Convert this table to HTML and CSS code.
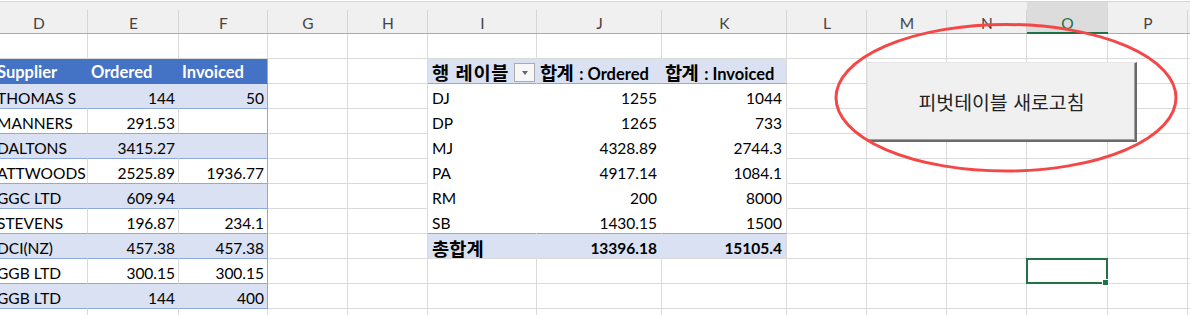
FILE: index.html
```html
<!DOCTYPE html>
<html lang="ko">
<head>
<meta charset="utf-8">
<title>Pivot refresh</title>
<link rel="stylesheet" href="styles.css">
</head>
<body>
<div class="page">
  <div class="sheet">
    <div class="cols">
      <div class="ch">D</div><div class="ch">E</div><div class="ch">F</div><div class="ch">G</div><div class="ch">H</div><div class="ch">I</div><div class="ch">J</div><div class="ch">K</div><div class="ch">L</div><div class="ch">M</div><div class="ch">N</div><div class="ch on">O</div><div class="ch">P</div><div class="ch">Q</div>
    </div>

    <!-- row 1 -->
    <div class="row">
      <div class="c"></div><div class="c"></div><div class="c"></div><div class="c"></div><div class="c"></div><div class="c"></div><div class="c"></div><div class="c"></div><div class="c"></div><div class="c"></div><div class="c"></div><div class="c"></div><div class="c"></div><div class="c"></div>
    </div>
    <!-- row 2 -->
    <div class="row">
      <div class="c d th">Supplier</div><div class="c th">Ordered</div><div class="c th edge">Invoiced</div>
      <div class="c"></div><div class="c"></div>
      <div class="c ph pi"><span class="ko kh">행 레이블</span><span class="dd"><i class="tri"></i></span></div>
      <div class="c ph"><span class="ko ko2">합계</span> : Ordered</div>
      <div class="c ph last"><span class="ko ko2">합계</span> : Invoiced</div>
      <div class="c"></div><div class="c"></div><div class="c"></div><div class="c"></div><div class="c"></div><div class="c"></div>
    </div>
    <!-- row 3 -->
    <div class="row">
      <div class="c d band">THOMAS S</div><div class="c r band">144</div><div class="c r band edge">50</div>
      <div class="c"></div><div class="c"></div>
      <div class="c pd">DJ</div><div class="c r pd">1255</div><div class="c r pd last">1044</div>
      <div class="c"></div><div class="c"></div><div class="c"></div><div class="c"></div><div class="c"></div><div class="c"></div>
    </div>
    <!-- row 4 -->
    <div class="row">
      <div class="c d wt">MANNERS</div><div class="c r wt">291.53</div><div class="c r wt edge"></div>
      <div class="c"></div><div class="c"></div>
      <div class="c pd">DP</div><div class="c r pd">1265</div><div class="c r pd last">733</div>
      <div class="c"></div><div class="c"></div><div class="c"></div><div class="c"></div><div class="c"></div><div class="c"></div>
    </div>
    <!-- row 5 -->
    <div class="row">
      <div class="c d band">DALTONS</div><div class="c r band">3415.27</div><div class="c r band edge"></div>
      <div class="c"></div><div class="c"></div>
      <div class="c pd">MJ</div><div class="c r pd">4328.89</div><div class="c r pd last">2744.3</div>
      <div class="c"></div><div class="c"></div><div class="c"></div><div class="c"></div><div class="c"></div><div class="c"></div>
    </div>
    <!-- row 6 -->
    <div class="row">
      <div class="c d wt">ATTWOODS</div><div class="c r wt">2525.89</div><div class="c r wt edge">1936.77</div>
      <div class="c"></div><div class="c"></div>
      <div class="c pd">PA</div><div class="c r pd">4917.14</div><div class="c r pd last">1084.1</div>
      <div class="c"></div><div class="c"></div><div class="c"></div><div class="c"></div><div class="c"></div><div class="c"></div>
    </div>
    <!-- row 7 -->
    <div class="row">
      <div class="c d band">GGC LTD</div><div class="c r band">609.94</div><div class="c r band edge"></div>
      <div class="c"></div><div class="c"></div>
      <div class="c pd">RM</div><div class="c r pd">200</div><div class="c r pd last">8000</div>
      <div class="c"></div><div class="c"></div><div class="c"></div><div class="c"></div><div class="c"></div><div class="c"></div>
    </div>
    <!-- row 8 -->
    <div class="row">
      <div class="c d wt">STEVENS</div><div class="c r wt">196.87</div><div class="c r wt edge">234.1</div>
      <div class="c"></div><div class="c"></div>
      <div class="c pd pend">SB</div><div class="c r pd pend">1430.15</div><div class="c r pd pend last">1500</div>
      <div class="c"></div><div class="c"></div><div class="c"></div><div class="c"></div><div class="c"></div><div class="c"></div>
    </div>
    <!-- row 9 -->
    <div class="row">
      <div class="c d band">DCI(NZ)</div><div class="c r band">457.38</div><div class="c r band edge">457.38</div>
      <div class="c"></div><div class="c"></div>
      <div class="c pt"><span class="ko">총합계</span></div><div class="c r pt">13396.18</div><div class="c r pt last">15105.4</div>
      <div class="c"></div><div class="c"></div><div class="c"></div><div class="c"></div><div class="c"></div><div class="c"></div>
    </div>
    <!-- row 10 -->
    <div class="row">
      <div class="c d wt">GGB LTD</div><div class="c r wt">300.15</div><div class="c r wt edge">300.15</div>
      <div class="c"></div><div class="c"></div><div class="c"></div><div class="c"></div><div class="c"></div><div class="c"></div><div class="c"></div><div class="c"></div>
      <div class="c sel"><span class="selbox"></span><span class="handle"></span></div>
      <div class="c"></div><div class="c"></div>
    </div>
    <!-- row 11 -->
    <div class="row">
      <div class="c d band">GGB LTD</div><div class="c r band">144</div><div class="c r band edge">400</div>
      <div class="c"></div><div class="c"></div><div class="c"></div><div class="c"></div><div class="c"></div><div class="c"></div><div class="c"></div><div class="c"></div><div class="c"></div><div class="c"></div><div class="c"></div>
    </div>
    <!-- row 12 -->
    <div class="row">
      <div class="c"></div><div class="c"></div><div class="c"></div><div class="c"></div><div class="c"></div><div class="c"></div><div class="c"></div><div class="c"></div><div class="c"></div><div class="c"></div><div class="c"></div><div class="c"></div><div class="c"></div><div class="c"></div>
    </div>
  </div>

  <button class="btn" type="button">피벗테이블 새로고침</button>

  <svg class="ring" width="1190" height="315" viewBox="0 0 1190 315" aria-hidden="true">
    <ellipse cx="1006" cy="97.75" rx="170" ry="73.25" fill="none" stroke="#F44848" stroke-width="3"/>
  </svg>
</div>
</body>
</html>
```

FILE: styles.css
```css
html, body {
  margin: 0;
  padding: 0;
  background: #ffffff;
}

body {
  font-family: Lato, "Noto Sans CJK KR", sans-serif;
  font-size: 15.5px;
  color: #000;
  overflow: hidden;
}

.page {
  position: relative;
  width: 1190px;
  height: 315px;
  overflow: hidden;
}

.sheet {
  margin-left: -10px;
}

.cols,
.row {
  display: grid;
  grid-template-columns: 98px 91px 89px 80px 80px 109px 125px 125px 80px 80px 80px 81px 80px 80px;
}

/* column header strip */
.cols {
  margin-top: 1px;
  border-top: 1px solid #d4d4d4;
  background: #f0f0f0;
}

.ch {
  height: 32px;
  box-sizing: border-box;
  border-bottom: 1px solid #ababab;
  display: flex;
  align-items: flex-end;
  justify-content: center;
  padding-bottom: 2px;
  line-height: 15.5px;
  color: #444;
  background: linear-gradient(#d5d5d5, #d5d5d5) right bottom / 1px 23px no-repeat;
}

.ch.on {
  background-color: #dcdcdc;
  color: #217346;
  border-bottom: 2px solid #217346;
  padding-bottom: 1px;
}

/* cells */
.c {
  height: 25px;
  box-sizing: border-box;
  border-right: 1px solid #dadada;
  border-bottom: 1px solid #dadada;
  padding: 3px 3px 0 3px;
  line-height: 22px;
  white-space: nowrap;
}

.r {
  text-align: right;
}

.d {
  padding-left: 7px;
  overflow: hidden;
}

/* source table */
.th {
  background: #4472C4;
  color: #fff;
  font-weight: 700;
  font-size: 16.5px;
  padding-top: 2px;
  border-right-color: #4472C4;
  border-bottom-color: #4472C4;
}

.band {
  background: #D9E1F2;
  border-right-color: #D9E1F2;
  border-bottom-color: #8EA9DB;
}

.wt {
  border-bottom-color: #8EA9DB;
}

.edge {
  border-right-color: #8EA9DB;
}

/* pivot table */
.ph {
  background: #D9E1F2;
  font-weight: 700;
  font-size: 16.5px;
  padding-top: 2px;
  border-right-color: #D9E1F2;
  border-bottom-color: #8EA9DB;
}

.pi {
  display: flex;
  justify-content: space-between;
  align-items: flex-start;
  padding-left: 4px;
  padding-right: 1px;
}

.pd {
  border-right-color: #fff;
  border-bottom-color: #fff;
  padding-left: 4px;
  padding-right: 4px;
}

.pend {
  border-bottom-color: #8EA9DB;
}

.pt {
  background: #D9E1F2;
  font-weight: 700;
  border-right-color: #D9E1F2;
  padding-left: 4px;
  padding-right: 4px;
}

.c.last {
  border-right-color: #dadada;
}

.ko {
  font-family: "Noto Sans CJK KR", sans-serif;
  font-size: 18.7px;
}

.kh {
  letter-spacing: 0.6px;
}

.ko2 {
  letter-spacing: -0.6px;
  margin-right: 2px;
}

.dd {
  width: 21px;
  height: 19px;
  box-sizing: border-box;
  margin-top: 2px;
  border: 1px solid #ababab;
  background: #f7f7f7;
  display: flex;
  align-items: center;
  justify-content: center;
}

.tri {
  width: 0;
  height: 0;
  border-left: 3.5px solid transparent;
  border-right: 3.5px solid transparent;
  border-top: 4px solid #666;
  margin-top: 1px;
}

/* selection */
.sel {
  position: relative;
}

.selbox {
  position: absolute;
  left: -1px;
  top: -1px;
  right: -1px;
  bottom: -1px;
  border: 2px solid #217346;
}

.handle {
  position: absolute;
  width: 5px;
  height: 5px;
  right: -2px;
  bottom: -3px;
  background: #217346;
  border: 1px solid #fff;
}

/* floating button + annotation */
.btn {
  position: absolute;
  left: 867px;
  top: 62px;
  width: 270px;
  height: 80px;
  box-sizing: border-box;
  margin: 0;
  padding: 0;
  background: #f0f0f0;
  border-top: 1px solid #e6e6e6;
  border-left: 1px solid #e6e6e6;
  border-right: 2px solid #6a6a6a;
  border-bottom: 2px solid #6a6a6a;
  box-shadow: inset -1px -1px 0 #a0a0a0;
  font-family: "Noto Sans CJK KR", sans-serif;
  font-size: 19.4px;
  color: #222;
  display: flex;
  align-items: center;
  justify-content: center;
}

.ring {
  position: absolute;
  left: 0;
  top: 0;
  pointer-events: none;
}
```
